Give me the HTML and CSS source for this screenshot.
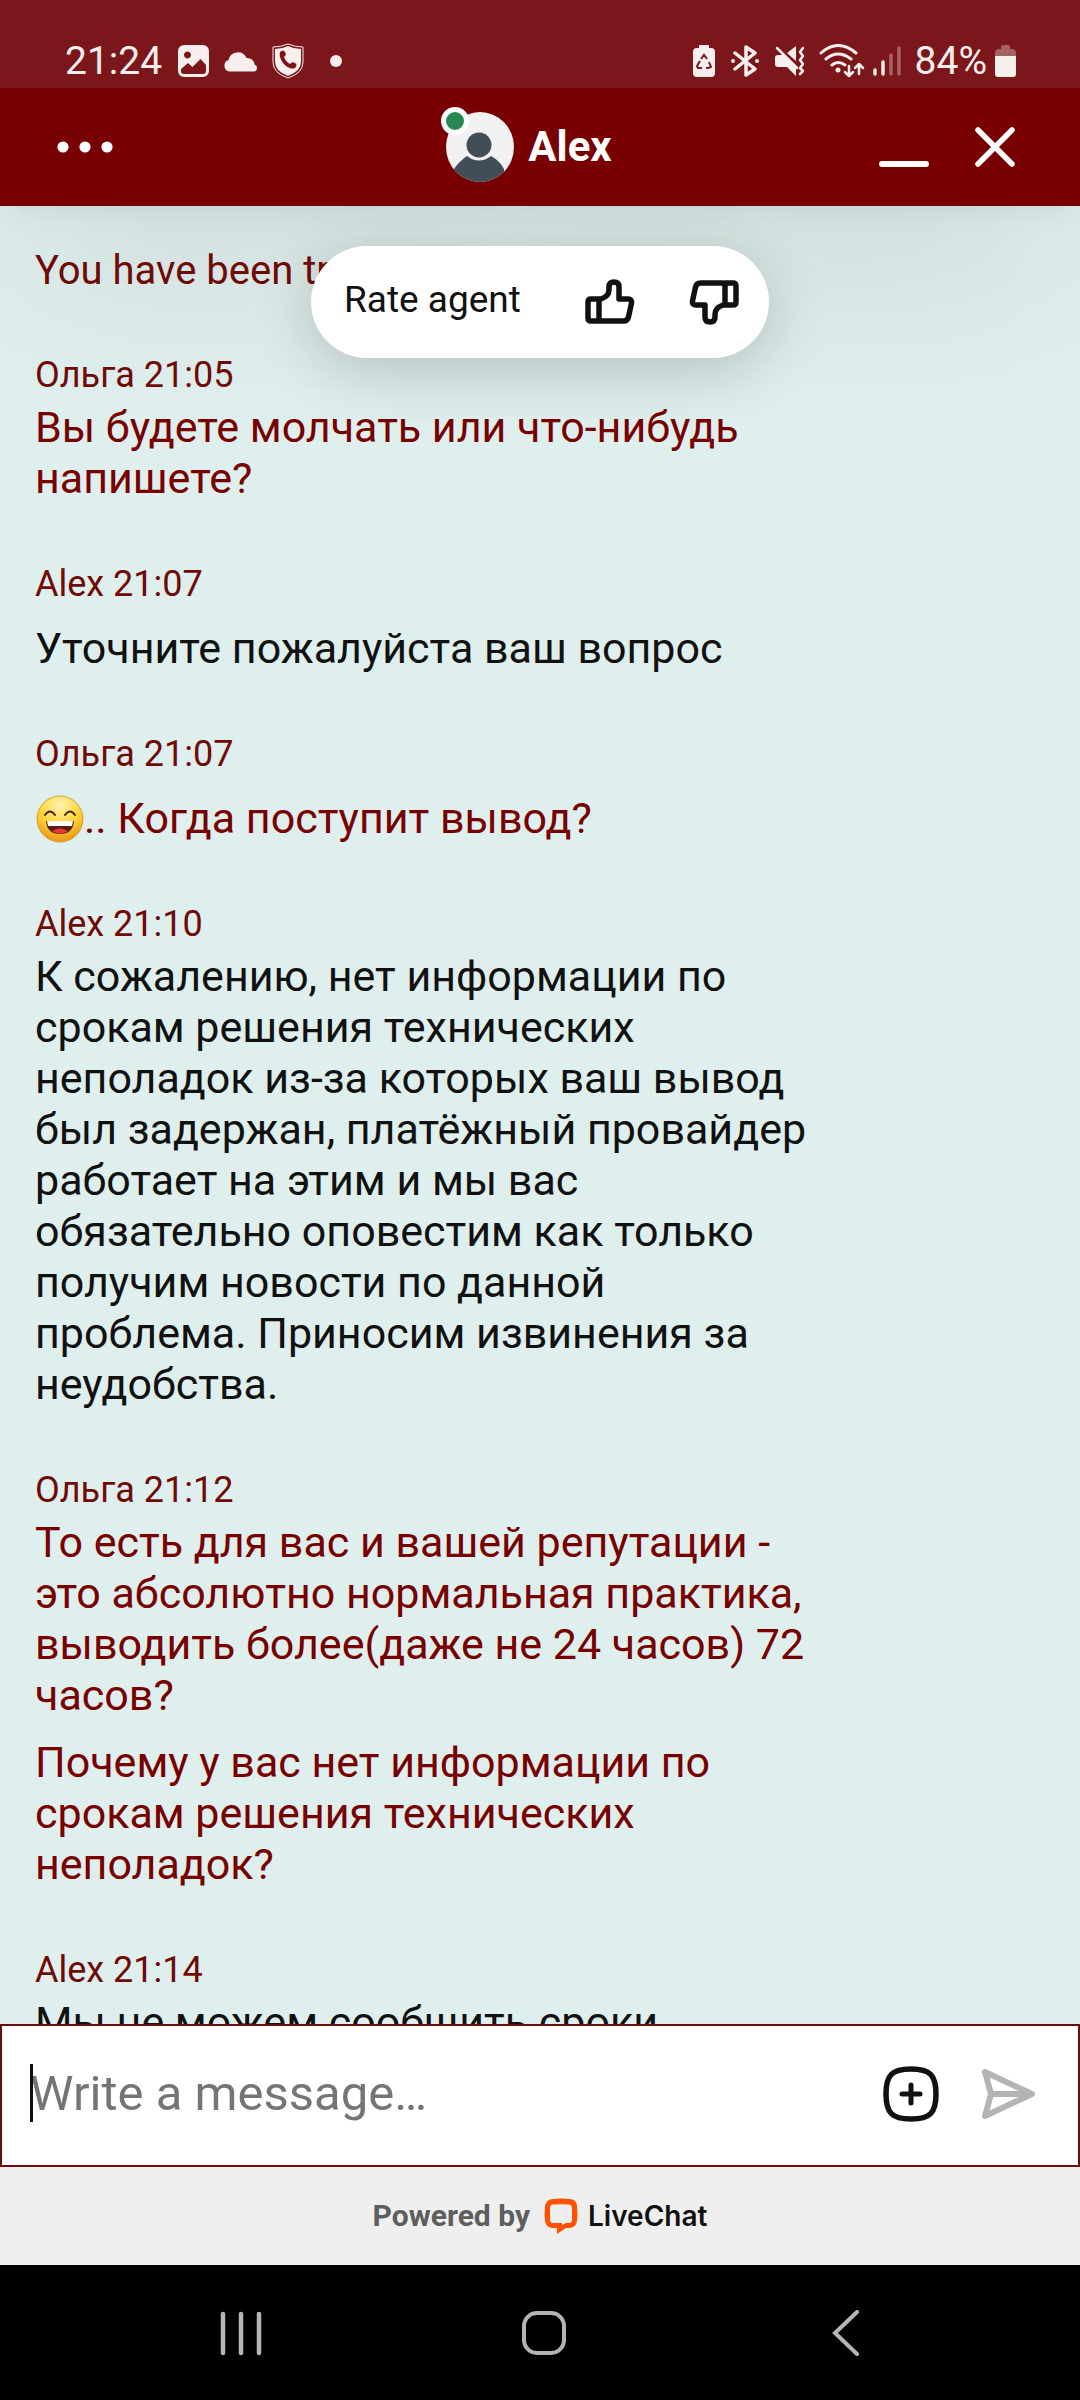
FILE: index.html
```html
<!DOCTYPE html>
<html lang="ru">
<head>
    <meta charset="UTF-8">
    <meta name="viewport" content="width=device-width, initial-scale=1">
    <title>Chat - Alex</title>
    <link rel="stylesheet" href="styles.css">
</head>
<body>

<div class="status-bar">
    <div class="status-group">
        <span class="status-time">21:24</span>
        <svg class="icon-picture" width="31" height="32" viewBox="0 0 31 32">
            <path fill="currentColor" fill-rule="evenodd" d="M6 0h19a6 6 0 0 1 6 6v20a6 6 0 0 1-6 6H6a6 6 0 0 1-6-6V6a6 6 0 0 1 6-6zM9.500 6.500a3.500 3.500 0 1 0 .01 0zM3 24v2q0 3 3 3h19q3 0 3-3v-6l-5.500-6-8 8-4.500-4z"/>
        </svg>
        <svg class="icon-cloud" width="35" height="21" viewBox="0 0 35 21">
            <path fill="currentColor" d="M6 20.500a6 6 0 0 1-.5-11.500A9.500 9.500 0 0 1 23.500 7a7 7 0 0 1 8 6.500 3.600 3.600 0 0 1-.5 7z"/>
        </svg>
        <svg class="icon-shield" width="32" height="36" viewBox="0 0 32 36">
            <path fill="none" stroke="currentColor" stroke-width="1" d="M16 1Q23 4 31 4v15q0 11-15 16Q1 30 1 19V4q8 0 15-3z"/>
            <path fill="currentColor" d="M16 3Q22 6 29 6v13q0 9-13 14Q3 28 3 19V6q7 0 13-3z"/>
            <path fill="#7b171a" d="M8 9q3-3 5 0 2 3-1 5 2 5 6 7 2-3 5-1t0 5c-7 3-17-8-15-16z"/>
        </svg>
        <span class="status-more"></span>
    </div>
    <div class="status-group">
        <svg class="icon-saver" width="22" height="32" viewBox="0 0 22 32">
            <path fill="currentColor" d="M6 1q0-1 1-1h8q1 0 1 1v2h2q4 0 4 4v21q0 4-4 4H4q-4 0-4-4V7q0-4 4-4h2z"/>
            <path fill="none" stroke="#7b171a" stroke-width="2" d="M8 14l3-4 3 4M16 17l2 5-3 1h-2M9 23H5l-1-2 3-5"/>
        </svg>
        <svg class="icon-bluetooth" width="28" height="32" viewBox="0 0 28 32">
            <path fill="none" stroke="currentColor" stroke-width="3.500" stroke-linejoin="round" stroke-linecap="round" d="M4 8l20 16-9 6V2l9 6L4 24"/>
            <circle cx="2" cy="16" r="2" fill="currentColor"/>
            <circle cx="26" cy="16" r="2" fill="currentColor"/>
        </svg>
        <svg class="icon-mute" width="30" height="30" viewBox="0 0 30 30">
            <path fill="currentColor" d="M3 9h5l13 13v8l-9-9H3q-3 0-3-3v-6q0-3 3-3zM12 7l9-7v15z"/>
            <path fill="none" stroke="currentColor" stroke-width="2.500" stroke-linecap="round" stroke-linejoin="round" d="M2 2l20 20M28 2l-3 4 3 4-3 4 3 4-3 4 3 3-3 3"/>
        </svg>
        <svg class="icon-wifi" width="46" height="34" viewBox="0 0 46 34">
            <path fill="none" stroke="currentColor" stroke-width="3" stroke-linecap="round" d="M2 9q17-15 35 0M7 15q12-10 25 0M13 21q6-5 13 0"/>
            <circle cx="19" cy="26" r="2.500" fill="currentColor"/>
            <path fill="none" stroke="currentColor" stroke-width="2.500" stroke-linecap="round" stroke-linejoin="round" d="M30 22v10m-4-4l4 4 4-4M40 30V20m-4 4l4-4 4 4"/>
        </svg>
        <svg class="icon-signal" width="28" height="30" viewBox="0 0 28 30">
            <path stroke="currentColor" stroke-width="3.500" stroke-linecap="round" d="M2 24v4M10 16v12"/>
            <path stroke="currentColor" stroke-width="3.500" stroke-linecap="round" opacity=".35" d="M18 9v19M26 2v26"/>
        </svg>
        <span class="status-percent">84%</span>
        <svg class="icon-battery" width="21" height="32" viewBox="0 0 21 32">
            <path fill="currentColor" opacity=".35" d="M6 2q0-2 2-2h5q2 0 2 2v2h2q4 0 4 4v3H0V8q0-4 4-4h2z"/>
            <path fill="currentColor" d="M0 11h21v18q0 3-3 3H3q-3 0-3-3z"/>
        </svg>
    </div>
</div>

<header class="chat-header">
    <div class="header-side">
        <button class="icon-button" type="button" aria-label="Menu">
            <svg width="56" height="12" viewBox="0 0 56 12">
                <circle cx="6" cy="6" r="5.600" fill="currentColor"/>
                <circle cx="28" cy="6" r="5.600" fill="currentColor"/>
                <circle cx="50" cy="6" r="5.600" fill="currentColor"/>
            </svg>
        </button>
    </div>
    <div class="agent">
        <div class="avatar">
            <svg width="68" height="70" viewBox="0 0 68 70">
                <defs><clipPath id="avatarClip"><ellipse cx="34" cy="35" rx="34" ry="35"/></clipPath></defs>
                <g clip-path="url(#avatarClip)">
                    <path fill="#f1f1f1" d="M0 0h68v70H0z"/>
                    <circle cx="33" cy="33" r="12.500" fill="#424d57"/>
                    <path fill="#424d57" d="M6 60q6-10 15-16 12 9 24 0 9 5 13 13v14H4z"/>
                </g>
            </svg>
            <span class="online"></span>
        </div>
        <h1 class="agent-name">Alex</h1>
    </div>
    <div class="header-side header-actions">
        <button class="icon-button" type="button" aria-label="Minimize">
            <svg width="50" height="44" viewBox="0 0 50 44">
                <path stroke="currentColor" stroke-width="6" stroke-linecap="round" d="M3 39h44"/>
            </svg>
        </button>
        <button class="icon-button" type="button" aria-label="Close">
            <svg width="40" height="40" viewBox="0 0 40 40">
                <path stroke="currentColor" stroke-width="5.500" stroke-linecap="round" d="M3 3l34 34M37 3L3 37"/>
            </svg>
        </button>
    </div>
</header>

<main class="chat">
    <div class="rate">
        <span class="rate-label">Rate agent</span>
        <button class="icon-button rate-icon" type="button" aria-label="Good">
            <svg width="50" height="46" viewBox="0 0 50 46">
                <path fill="none" stroke="currentColor" stroke-width="5.500" stroke-linejoin="round" d="M14 20H6q-3 0-3 3v16q0 3 3 3h8zM14 20h2q8-3 8-9V8q0-5 5-5t5 5v12h9q4 0 3.500 4l-3 14q-1 4-5 4H17q-3 0-3-3z"/>
            </svg>
        </button>
        <button class="icon-button rate-icon" type="button" aria-label="Bad">
            <svg width="50" height="46" viewBox="0 0 50 46">
                <path fill="none" stroke="currentColor" stroke-width="5.500" stroke-linejoin="round" d="M36 26h8q3 0 3-3V7q0-3-3-3h-8zM36 26h-2q-8 3-8 9v3q0 5-5 5t-5-5V26H7q-4 0-3.500-4l3-14q1-4 5-4H33q3 0 3 3z"/>
            </svg>
        </button>
    </div>

    <p class="system">You have been transferred</p>

    <div class="group customer">
        <div class="meta">Ольга 21:05</div>
        <p class="message">Вы будете молчать или что-нибудь напишете?</p>
    </div>

    <div class="group">
        <div class="meta">Alex 21:07</div>
        <p class="message short">Уточните пожалуйста ваш вопрос</p>
    </div>

    <div class="group customer">
        <div class="meta">Ольга 21:07</div>
        <p class="message short"><svg class="emoji" width="48" height="48" viewBox="0 0 48 48" role="img" aria-label="Smile">
            <defs>
                <radialGradient id="face" cx=".5" cy=".2" r=".85">
                    <stop offset="0" stop-color="#fff3ae"/>
                    <stop offset=".55" stop-color="#ffd235"/>
                    <stop offset="1" stop-color="#e88a10"/>
                </radialGradient>
            </defs>
            <circle cx="24" cy="24" r="23" fill="url(#face)" stroke="#d9a030"/>
            <path fill="none" stroke="#4a2a10" stroke-width="2" stroke-linecap="round" d="M9 20q5-7 10 0M29 20q5-7 10 0"/>
            <path fill="#5c1d10" d="M10 26h28q-1 13-14 13T10 26z"/>
            <path fill="#fff" d="M11 26h26l-1 5H12z"/>
            <path fill="#e23b35" d="M16 36q8-5 16 0-8 5-16 0z"/>
        </svg>.. Когда поступит вывод?</p>
    </div>

    <div class="group">
        <div class="meta">Alex 21:10</div>
        <p class="message">К сожалению, нет информации по срокам решения технических неполадок из-за которых ваш вывод был задержан, платёжный провайдер работает на этим и мы вас обязательно оповестим как только получим новости по данной проблема. Приносим извинения за неудобства.</p>
    </div>

    <div class="group customer">
        <div class="meta">Ольга 21:12</div>
        <p class="message">То есть для вас и вашей репутации - это абсолютно нормальная практика, выводить более(даже не 24 часов) 72 часов?</p>
        <p class="message">Почему у вас нет информации по срокам решения технических неполадок?</p>
    </div>

    <div class="group">
        <div class="meta">Alex 21:14</div>
        <p class="message">Мы не можем сообщить сроки</p>
    </div>
</main>

<form class="composer">
    <span class="caret"></span>
    <input class="composer-input" type="text" placeholder="Write a message…" aria-label="Write a message">
    <button class="icon-button" type="button" aria-label="Add">
        <svg width="56" height="56" viewBox="0 0 56 56">
            <path fill="none" stroke="currentColor" stroke-width="5.500" d="M28 3C47 3 53 9 53 28S47 53 28 53 3 47 3 28 9 3 28 3z"/>
            <path stroke="currentColor" stroke-width="5" stroke-linecap="round" d="M19 28h18M28 19v18"/>
        </svg>
    </button>
    <button class="icon-button send" type="submit" aria-label="Send">
        <svg width="54" height="50" viewBox="0 0 54 50">
            <path fill="none" stroke="currentColor" stroke-width="6" stroke-linejoin="round" d="M4 3l47 22L4 47l6-22zM10 25h41"/>
        </svg>
    </button>
</form>

<footer class="powered">
    <span>Powered by</span>
    <a class="livechat" href="#">
        <svg width="34" height="36" viewBox="0 0 34 36">
            <path fill="#ff5100" fill-rule="evenodd" d="M9 1Q17 0 25 1q8 0 8 8 1 7 0 14-1 7-8 7h-3l-9 6v-6H9q-7 0-8-7Q0 16 1 9q1-8 8-8zM9 6.500Q6 7 6 10v12q0 3 3 3h9v2l4-2h3q3 0 3-3V10q0-3-3-3.500-8-.5-16 0z"/>
        </svg>
        <span class="livechat-name">LiveChat</span>
    </a>
</footer>

<nav class="system-nav">
    <button class="icon-button" type="button" aria-label="Recent apps">
        <svg width="44" height="46" viewBox="0 0 44 46">
            <path stroke="currentColor" stroke-width="4.500" stroke-linecap="round" d="M4 4v39M22 4v39M40 4v39"/>
        </svg>
    </button>
    <button class="icon-button" type="button" aria-label="Home">
        <svg width="46" height="46" viewBox="0 0 46 46">
            <rect x="3" y="3" width="40" height="40" rx="13" fill="none" stroke="currentColor" stroke-width="4"/>
        </svg>
    </button>
    <button class="icon-button" type="button" aria-label="Back">
        <svg width="44" height="46" viewBox="0 0 44 46">
            <path fill="none" stroke="currentColor" stroke-width="4" stroke-linecap="round" d="M33 2L11 23l22 21"/>
        </svg>
    </button>
</nav>

</body>
</html>
```
FILE: styles.css
```css
* {
    box-sizing: border-box;
}
body {
    display: flex;
    flex-direction: column;
    height: 100vh;
    margin: 0;
    overflow: hidden;
    font-family: Roboto, "Liberation Sans", sans-serif;
    color: #111;
    background-color: #dfefed;
}
svg {
    display: block;
}
p, h1 {
    margin: 0;
}
.icon-button {
    flex: none;
    padding: 0;
    border: 0;
    background: none;
    color: inherit;
}

/* Phone status bar */
.status-bar {
    position: relative;
    z-index: 2;
    flex: none;
    display: flex;
    justify-content: space-between;
    padding: 37px 64px 3px 65px;
    background-color: #7b171a;
    color: #f7eeee;
    font-size: 39px;
    line-height: 48px;
}
.status-group {
    display: flex;
    align-items: center;
}
.icon-picture {
    margin-left: 16px;
}
.icon-cloud {
    margin-left: 14px;
}
.icon-shield {
    margin-left: 14px;
}
.status-more {
    width: 12px;
    height: 12px;
    margin-left: 26px;
    border-radius: 50%;
    background-color: currentColor;
}
.icon-bluetooth,
.icon-mute {
    margin-left: 16px;
}
.icon-wifi {
    margin-left: 14px;
}
.icon-signal {
    margin-left: 8px;
}
.status-percent {
    margin-left: 14px;
}
.icon-battery {
    margin-left: 8px;
}

/* Chat header */
.chat-header {
    position: relative;
    z-index: 1;
    flex: none;
    display: flex;
    align-items: center;
    padding: 0 65px 0 57px;
    height: 118px;
    background-color: #780000;
    color: #fff;
    box-shadow: 0 8px 30px -10px rgba(0, 0, 0, 0.1), 0 40px 200px -20px rgba(0, 0, 0, 0.18);
}
.header-side {
    flex: 1;
    display: flex;
}
.header-actions {
    justify-content: flex-end;
    align-items: center;
    gap: 46px;
}
.agent {
    display: flex;
    align-items: center;
    gap: 14px;
    padding-right: 14px;
}
.avatar {
    position: relative;
}
.online {
    position: absolute;
    top: -5px;
    left: -5px;
    width: 28px;
    height: 28px;
    border: 5px solid #fff;
    border-radius: 50%;
    background-color: #268750;
}
.agent-name {
    font-size: 42px;
    line-height: 50px;
    font-weight: 700;
}

/* Messages */
.chat {
    position: relative;
    z-index: 2;
    flex: 1;
    min-height: 0;
    overflow: hidden;
    padding: 40px 35px 0;
}
.rate {
    position: absolute;
    top: 40px;
    left: 50%;
    transform: translateX(-50%);
    display: flex;
    align-items: center;
    width: 458px;
    height: 112px;
    padding: 0 30px 0 33px;
    border-radius: 56px;
    background-color: #fff;
    box-shadow: 0 12px 60px rgba(0, 0, 0, 0.18);
}
.rate-label {
    flex: 1;
    font-size: 37px;
    line-height: 44px;
    padding-bottom: 4px;
}
.rate-icon + .rate-icon {
    margin-left: 54px;
}
.system {
    font-size: 40px;
    line-height: 49px;
    color: #700a06;
}
.group {
    max-width: 78%;
    margin-top: 53px;
}
.meta {
    font-size: 36px;
    line-height: 54px;
    color: #700a06;
}
.message {
    font-size: 43px;
    line-height: 51px;
}
.message + .message {
    margin-top: 16px;
}
.message.short {
    padding-top: 12px;
}
.customer .message {
    color: #780000;
}
.emoji {
    display: inline-block;
    margin-left: 1px;
    vertical-align: -10px;
}

/* Message box */
.composer {
    position: relative;
    z-index: 2;
    flex: none;
    display: flex;
    align-items: center;
    gap: 42px;
    height: 143px;
    padding: 0 43px 4px 28px;
    border: 2px solid #6b0d0a;
    background-color: #fff;
}
.composer-input {
    flex: 1;
    min-width: 0;
    padding: 0;
    border: 0;
    outline: 0;
    background: none;
    font-family: inherit;
    font-size: 49px;
    line-height: 60px;
    color: #111;
}
.composer-input::placeholder {
    color: #757575;
    opacity: 1;
}
.caret {
    position: absolute;
    top: 38px;
    left: 28px;
    width: 3px;
    height: 58px;
    background-color: #111;
}
.send {
    color: #b4b4b4;
}

/* Footer */
.powered {
    flex: none;
    display: flex;
    align-items: center;
    justify-content: center;
    gap: 14px;
    height: 98px;
    background-color: #efefef;
    color: #5e5e5e;
    font-size: 30px;
    line-height: 36px;
    font-weight: 700;
}
.livechat {
    display: flex;
    align-items: center;
    gap: 10px;
    color: #111;
    text-decoration: none;
}
.livechat-name {
    font-family: Inter, Roboto, sans-serif;
    font-size: 28px;
    font-weight: 600;
}

/* Phone navigation */
.system-nav {
    flex: none;
    display: flex;
    align-items: center;
    justify-content: space-between;
    height: 135px;
    padding: 0 212px 0 219px;
    background-color: #000;
    color: #b4b4b4;
}
```
